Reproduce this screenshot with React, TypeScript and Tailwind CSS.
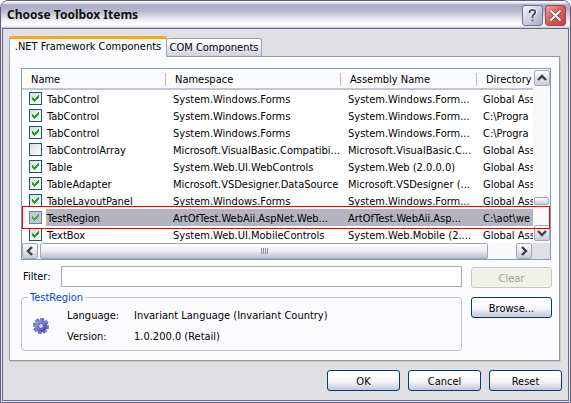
import React, { useState } from "react";

type Item = {
  name: string;
  namespace: string;
  assembly: string;
  directory: string;
  checked: boolean;
  selected?: boolean;
};

const items: Item[] = [
  { name: "TabControl", namespace: "System.Windows.Forms", assembly: "System.Windows.Form...", directory: "Global Ass", checked: true },
  { name: "TabControl", namespace: "System.Windows.Forms", assembly: "System.Windows.Form...", directory: "C:\\Progra", checked: true },
  { name: "TabControl", namespace: "System.Windows.Forms", assembly: "System.Windows.Form...", directory: "C:\\Progra", checked: true },
  { name: "TabControlArray", namespace: "Microsoft.VisualBasic.Compatibi...", assembly: "Microsoft.VisualBasic.C...", directory: "Global Ass", checked: false },
  { name: "Table", namespace: "System.Web.UI.WebControls", assembly: "System.Web (2.0.0.0)", directory: "Global Ass", checked: true },
  { name: "TableAdapter", namespace: "Microsoft.VSDesigner.DataSource", assembly: "Microsoft.VSDesigner (...", directory: "Global Ass", checked: true },
  { name: "TableLayoutPanel", namespace: "System.Windows.Forms", assembly: "System.Windows.Form...", directory: "Global Ass", checked: true },
  { name: "TestRegion", namespace: "ArtOfTest.WebAii.AspNet.Web...", assembly: "ArtOfTest.WebAii.Asp...", directory: "C:\\aot\\we", checked: true, selected: true },
  { name: "TextBox", namespace: "System.Web.UI.MobileControls", assembly: "System.Web.Mobile (2....", directory: "Global Ass", checked: true },
];

function CheckBox({ id, initial, faded }: { id: string; initial: boolean; faded?: boolean }) {
  const [on, setOn] = useState(initial);
  return (
    <span className="grid h-[13px] w-[13px] shrink-0">
      <input
        id={id}
        type="checkbox"
        checked={on}
        onChange={() => setOn(!on)}
        className={
          faded
            ? "col-start-1 row-start-1 h-[13px] w-[13px] appearance-none border border-[#6887a8] bg-[#c5c8ce]"
            : "col-start-1 row-start-1 h-[13px] w-[13px] appearance-none border border-[#1c5180] bg-linear-to-br from-[#dcdcd7] to-white"
        }
      />
      {on && (
        <svg viewBox="0 0 13 13" shapeRendering="crispEdges" className="pointer-events-none col-start-1 row-start-1 h-[13px] w-[13px]">
          <path
            d="M3 5h1v3H3zM4 6h1v3H4zM5 7h1v3H5zM6 6h1v3H6zM7 5h1v3H7zM8 4h1v3H8zM9 3h1v3H9z"
            fill={faded ? "#55a35c" : "#21a121"}
          />
        </svg>
      )}
    </span>
  );
}

const arrows = {
  up: "M4 10l4-4 4 4",
  down: "M4 6l4 4 4-4",
  left: "M10 4L6 8l4 4",
  right: "M6 4l4 4-4 4",
};

function ScrollButton({ dir }: { dir: keyof typeof arrows }) {
  return (
    <button
      type="button"
      aria-label={"Scroll " + dir}
      className="h-4 w-4 shrink-0 rounded-xs border border-[#a5a5b5] bg-linear-to-b from-white to-[#cbcbda]"
    >
      <svg viewBox="1 1 14 14" className="h-[14px] w-[14px]">
        <path d={arrows[dir]} fill="none" stroke="#3f3f48" strokeWidth="2.4" />
      </svg>
    </button>
  );
}

function PushButton({ children, wide }: { children: React.ReactNode; wide?: boolean }) {
  return (
    <button
      type="button"
      className={
        (wide ? "w-[81px]" : "w-[73px]") +
        " h-[21px] rounded-[3px] border border-[#003c74] bg-linear-to-b from-white from-30% via-[#f0f0f7] via-60% to-[#c5c5d9] pt-[2px] text-center leading-[17px]"
      }
    >
      {children}
    </button>
  );
}

function Gear() {
  const teeth = [0, 45, 90, 135, 180, 225, 270, 315];
  return (
    <svg viewBox="0 0 16 16" className="h-4 w-4">
      <defs>
        <linearGradient id="gear" x1="0" y1="0" x2="1" y2="1">
          <stop offset="0" stopColor="#a3a6e6" />
          <stop offset="0.55" stopColor="#6b6ec6" />
          <stop offset="1" stopColor="#3a3b8e" />
        </linearGradient>
      </defs>
      <g fill="url(#gear)" stroke="#4a4ca0" strokeWidth="0.5">
        {teeth.map((a) => (
          <rect key={a} x="6.2" y="0.2" width="3.6" height="4" rx="0.6" transform={`rotate(${a + 10} 8 8)`} />
        ))}
      </g>
      <circle cx="8" cy="8" r="6" fill="url(#gear)" />
      <circle cx="8" cy="8" r="2.3" fill="#f4f4fd" stroke="#4f51aa" strokeWidth="0.8" />
      <circle cx="8" cy="8" r="0.9" fill="#c9caec" />
    </svg>
  );
}

export default function App() {
  return (
    <div className="rounded-t-lg border border-[#5f5d7a] bg-[#e9e9f2] font-['DejaVu_Sans_Condensed','DejaVu_Sans',sans-serif] text-[11px] leading-[17px] text-black">
      <header className="flex h-[27px] items-center rounded-t-[7px] bg-[linear-gradient(to_bottom,#ffffff_0px,#e4e4ee_2px,#a9a9c2_4px,#b4b4cb_9px,#dcdce8_16px,#ffffff_23px,#f4f4f8_25px,#c0c0cf_27px)] pr-1 pl-[6px]">
        <h1 className="flex-1 pt-px font-['Noto_Sans','Open_Sans',sans-serif] text-[12px] leading-5 font-bold text-[#0e1010]">Choose Toolbox Items</h1>
        <div className="flex gap-[2px] pt-px">
          <button type="button" aria-label="Help" className="h-[21px] w-[21px] rounded-[3px] border border-[#6f7296] bg-linear-to-br from-[#f4f4fa] via-[#cfcfdf] to-[#a6a6c0]">
            <svg viewBox="0 0 19 19" className="h-[19px] w-[19px]">
              <path d="M6.6 7V5.6Q6.8 3.9 9.5 3.9t2.8 2.2q0 1.3-1.4 2.2T9.5 10.6V12M9.5 13.4v2.2" fill="none" stroke="#fff" strokeWidth="3.6" />
              <path d="M6.6 7V5.6Q6.8 3.9 9.5 3.9t2.8 2.2q0 1.3-1.4 2.2T9.5 10.6V12M9.5 13.4v2.2" fill="none" stroke="#4b4b68" strokeWidth="2" />
            </svg>
          </button>
          <button type="button" aria-label="Close" className="h-[21px] w-[21px] rounded-[3px] border border-[#9c4355] bg-linear-to-br from-[#f0a09a] via-[#d95c58] to-[#c84040]">
            <svg viewBox="0 0 19 19" className="h-[19px] w-[19px]">
              <path d="M4.5 4.5l10 10M14.5 4.5l-10 10" stroke="#8d3038" strokeWidth="3.4" />
              <path d="M4.5 4.5l10 10M14.5 4.5l-10 10" stroke="#fff" strokeWidth="2.2" />
            </svg>
          </button>
        </div>
      </header>

      <main className="mx-px mb-px border border-[#6b6887] bg-[#e0dfe3] px-[6px] pt-[7px] pb-[9px]">
        <div role="tablist" className="relative z-10 -mb-px flex items-end">
          <button type="button" role="tab" aria-selected="true" className="h-[21px] w-[158px] rounded-t-[3px] border-x border-t-[3px] border-x-[#91a7b4] border-t-[#f7a91e] bg-[#fcfcfe] pb-[2px] text-center leading-4 whitespace-nowrap">
            .NET Framework Components
          </button>
          <button type="button" role="tab" aria-selected="false" className="mb-px h-[18px] w-[95px] rounded-t-[3px] border border-b-0 border-l-0 border-[#91a7b4] bg-linear-to-b from-white from-20% to-[#cfcfe0] pt-px text-center leading-4 whitespace-nowrap">
            COM Components
          </button>
        </div>

        <section className="mr-[2px] border border-[#919b9c] bg-[#fcfcfe] px-[11px] pt-[11px] pb-[9px] shadow-[1px_1px_0_#d0cebf]">
          <div className="relative -mr-[3px] border border-[#7f9db9] bg-white">
            <div className="flex">
              <div className="min-w-0 flex-1">
                <table className="w-full table-fixed border-separate border-spacing-0 text-left leading-[15px] whitespace-nowrap">
                  <colgroup>
                    <col className="w-[144px]" />
                    <col className="w-[175px]" />
                    <col className="w-[136px]" />
                    <col />
                  </colgroup>
                  <thead>
                    <tr>
                      {["Name", "Namespace", "Assembly Name", "Directory"].map((h) => (
                        <th key={h} scope="col" className="group h-[21px] border-b-2 border-[#c5c4d2] bg-[#fbfbfd] p-0 pt-[2px] font-normal">
                          <div className="h-[13px] border-r border-[#b8b8c8] pl-[9px] leading-[13px] group-last:border-r-0">{h}</div>
                        </th>
                      ))}
                    </tr>
                  </thead>
                  <tbody>
                    {items.map((it, i) => (
                      <tr key={i} className={it.selected ? "[&_.fill]:bg-[#b2b4bf]" : ""}>
                        <td className="h-[17px] p-0 pl-[7px]">
                          <div className="flex items-center gap-1">
                            <CheckBox id={"item" + i} initial={it.checked} faded={it.selected} />
                            <label htmlFor={"item" + i} className="fill flex-1 pt-[2px] pl-px">{it.name}</label>
                          </div>
                        </td>
                        <td className="fill h-[17px] p-0 pt-[2px] pl-[7px]">{it.namespace}</td>
                        <td className="fill h-[17px] p-0 pt-[2px] pl-[7px]">{it.assembly}</td>
                        <td className="fill h-[17px] p-0 pt-[2px] pl-[6px]">{it.directory}</td>
                      </tr>
                    ))}
                  </tbody>
                </table>
              </div>
              <div className="flex w-[17px] flex-col items-center justify-between bg-[#f9f9fc] pt-px pb-[2px]">
                <ScrollButton dir="up" />
                <div className="flex flex-col gap-5">
                  <div className="h-2 w-[15px] rounded-xs border border-[#a5a5b5] bg-linear-to-b from-white to-[#cbcbda]" />
                  <ScrollButton dir="down" />
                </div>
              </div>
            </div>
            <div className="flex h-4 bg-[#f9f9fc]">
              <ScrollButton dir="left" />
              <div className="ml-[2px] flex flex-1 items-center justify-center gap-px rounded-xs border border-[#a5a5b5] bg-linear-to-b from-white via-[#ececf3] to-[#bcbccd]">
                {[0, 1, 2, 3].map((n) => (
                  <span key={n} className="h-[6px] w-px bg-[#8f8fa3]" />
                ))}
              </div>
              <div className="w-7" />
              <ScrollButton dir="right" />
              <div className="w-[18px] bg-[#e0dfe3]" />
            </div>
            <div className="pointer-events-none absolute inset-x-0 top-[137px] h-[23px] border border-[#f00000]" />
          </div>

          <div className="flex gap-[9px] pt-[6px]">
            <div className="min-w-0 flex-1">
              <div className="flex items-center">
                <label htmlFor="filter" className="w-10 pl-[2px]">Filter:</label>
                <input id="filter" type="text" className="h-[21px] min-w-0 flex-1 border border-[#a5acb2] bg-white px-1 outline-none" />
              </div>
              <fieldset className="mt-[2px] rounded-[4px] border border-[#bfbfc6] pb-[5px] pl-[6px]">
                <legend className="px-[2px] text-[#0046d5]">TestRegion</legend>
                <div className="flex items-center gap-[18px] pt-px pl-[5px]">
                  <Gear />
                  <dl className="grid flex-1 grid-cols-[67px_1fr] gap-y-1">
                    <dt>Language:</dt>
                    <dd>Invariant Language (Invariant Country)</dd>
                    <dt>Version:</dt>
                    <dd>1.0.200.0 (Retail)</dd>
                  </dl>
                </div>
              </fieldset>
            </div>
            <div className="-mr-1 flex flex-col gap-[9px] pt-px">
              <button type="button" disabled className="h-[21px] w-[81px] rounded-[3px] border border-[#c9c7ba] bg-[#f1f1ec] pt-[2px] text-center leading-[17px] text-[#a1a192]">
                Clear
              </button>
              <PushButton wide>Browse...</PushButton>
            </div>
          </div>
        </section>

        <footer className="flex justify-end gap-2 pt-[9px]">
          <PushButton>OK</PushButton>
          <PushButton>Cancel</PushButton>
          <PushButton>Reset</PushButton>
        </footer>
      </main>
    </div>
  );
}
